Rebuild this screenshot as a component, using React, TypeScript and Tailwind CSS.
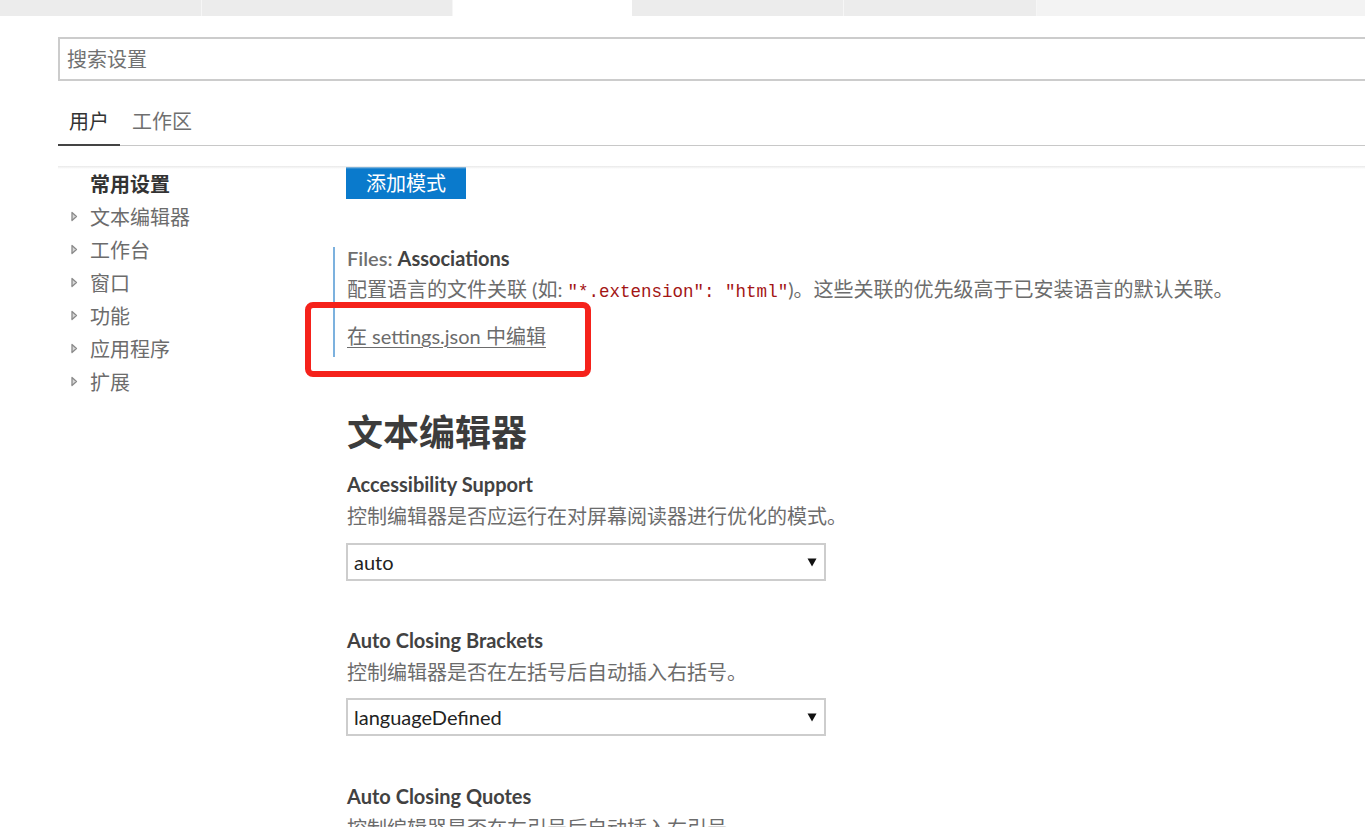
import React from "react";

const Tri = () => (
  <svg width="7" height="11" viewBox="0 0 7 11" className="shrink-0">
    <path d="M1 1.5 L5.5 5.5 L1 9.5 Z" fill="#d8d8d8" stroke="#8a8a8a" strokeWidth="1.3" strokeLinejoin="round" />
  </svg>
);

const Arrow = () => (
  <svg width="10" height="10" viewBox="0 0 10 10" className="shrink-0">
    <path d="M0.5 1.5 L9.5 1.5 L5 9.5 Z" fill="#111" />
  </svg>
);

const SelectBox = ({ value }: { value: string }) => (
  <div className="w-[480px] h-[38px] border-2 border-[#cdcdcd] flex items-center justify-between pl-[6px] pr-[7px] text-[20px] text-[#222]">
    <span>{value}</span>
    <Arrow />
  </div>
);

export default function App() {
  const sideItems = ["文本编辑器", "工作台", "窗口", "功能", "应用程序", "扩展"];
  return (
    <div className="relative w-[1365px] h-[827px] overflow-hidden bg-white font-['Lato','Noto_Sans_CJK_SC',sans-serif]">
      {/* top tab strip */}
      <div className="flex h-[16px]">
        <div className="w-[202px] bg-[#ececec] border-r border-[#f6f6f6]" />
        <div className="w-[251px] bg-[#ececec] border-r border-[#f6f6f6]" />
        <div className="w-[179px] bg-white" />
        <div className="w-[212px] bg-[#ececec] border-r border-[#f6f6f6]" />
        <div className="w-[193px] bg-[#ececec] border-r border-[#f6f6f6]" />
        <div className="flex-1 bg-[#f3f3f3]" />
      </div>

      {/* search */}
      <div className="pt-[21px] pl-[58px]">
        <div className="w-[1330px] h-[44px] border-2 border-[#cccccc] flex items-center pl-[7px] text-[20px] text-[#717171]">
          搜索设置
        </div>
      </div>

      {/* user/workspace tabs */}
      <div className="mt-[19px] ml-[58px] flex border-b border-[#c8c8c8] items-start">
        <div className="h-[46px] -mb-[1px] border-b-2 border-[#444444] flex items-center pb-[3px] px-[11px] text-[20px] text-[#333333]">
          用户
        </div>
        <div className="h-[45px] flex items-center pb-[4px] px-[12px] text-[20px] text-[#6f6f6f]">
          工作区
        </div>
      </div>

      {/* body */}
      <div className="relative mt-[20px] flex">
        <div className="absolute top-0 left-[58px] right-0 h-[3px] bg-gradient-to-b from-[#e9e9e9] to-transparent" />

        {/* sidebar */}
        <div className="w-[333px] shrink-0 pl-[71px] pt-[1px]">
          <div className="h-[33px] flex items-center pl-[19px] text-[20px] font-bold text-[#333333]">
            常用设置
          </div>
          {sideItems.map((s) => (
            <div key={s} className="h-[33px] flex items-center gap-[12px] text-[20px] text-[#6c6c6c]">
              <Tri />
              <span>{s}</span>
            </div>
          ))}
        </div>

        {/* content */}
        <div className="flex-1">
          <div className="ml-[13px] mt-[1px] w-[120px] h-[32px] bg-[#0a7acc] flex items-center justify-center text-[20px] text-white">
            添加模式
          </div>

          <div className="mt-[48px] border-l-2 border-[#7cb1de] pl-[12px] pb-[10px]">
            <div className="h-[22px] leading-[22px] text-[20px]">
              <span className="text-[#6f6f6f] font-semibold">Files: </span>
              <span className="text-[#424242] font-bold">Associations</span>
            </div>
            <div className="mt-[9px] h-[22px] leading-[22px] text-[20px] text-[#6c6c6c] whitespace-nowrap">
              配置语言的文件关联 (如:{" "}
              <span className="font-['Liberation_Mono',monospace] text-[17.5px] text-[#a31515]">
                "*.extension": "html"
              </span>
              )。这些关联的优先级高于已安装语言的默认关联。
            </div>
            <div className="mt-[25px] h-[22px] leading-[22px] text-[20px] text-[#6c6c6c] underline underline-offset-[3px] decoration-[1px]">
              在 settings.json 中编辑
            </div>
          </div>

          <div className="ml-[14px] mt-[53px] h-[44px] leading-[44px] text-[36px] font-bold text-[#3c3c3c]">
            文本编辑器
          </div>

          <div className="ml-[14px]">
            <div className="mt-[19px] h-[22px] leading-[22px] text-[20px] font-bold text-[#424242]">
              Accessibility Support
            </div>
            <div className="mt-[10px] h-[22px] leading-[22px] text-[20px] text-[#6c6c6c]">
              控制编辑器是否应运行在对屏幕阅读器进行优化的模式。
            </div>
            <div className="mt-[16px] -ml-[1px]">
              <SelectBox value="auto" />
            </div>

            <div className="mt-[48px] h-[22px] leading-[22px] text-[20px] font-bold text-[#424242]">
              Auto Closing Brackets
            </div>
            <div className="mt-[10px] h-[22px] leading-[22px] text-[20px] text-[#6c6c6c]">
              控制编辑器是否在左括号后自动插入右括号。
            </div>
            <div className="mt-[15px] -ml-[1px]">
              <SelectBox value="languageDefined" />
            </div>

            <div className="mt-[49px] h-[22px] leading-[22px] text-[20px] font-bold text-[#424242]">
              Auto Closing Quotes
            </div>
            <div className="mt-[10px] h-[22px] leading-[22px] text-[20px] text-[#6c6c6c]">
              控制编辑器是否在左引号后自动插入右引号。
            </div>
          </div>
        </div>
      </div>

      {/* red annotation */}
      <div className="absolute left-[305px] top-[302px] w-[286px] h-[75px] border-[6px] border-[#f5221b] rounded-[8px]" />
    </div>
  );
}
